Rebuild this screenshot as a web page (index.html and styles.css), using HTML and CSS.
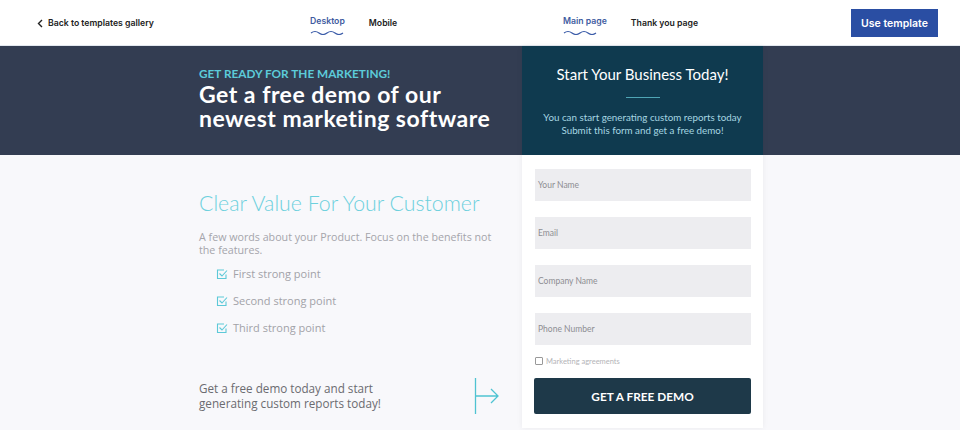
FILE: index.html
```html
<!DOCTYPE html>
<html>
<head>
<meta charset="utf-8">
<link rel="stylesheet" href="styles.css">
</head>
<body>
<header class="topbar">
  <a class="back"><svg class="chev" width="6" height="9" viewBox="0 0 6 9"><path d="M5 1 L1.5 4.5 L5 8" fill="none" stroke="#222" stroke-width="1.4"/></svg>Back to templates gallery</a>
  <nav class="tabs tabs-device">
    <span class="tab active">Desktop<svg class="wave" width="34" height="5" viewBox="0 0 34 5"><path d="M1 3 Q5 0 9 3 T17 3 T25 3 T33 3" fill="none" stroke="#3a5ba8" stroke-width="1.2"/></svg></span>
    <span class="tab">Mobile</span>
  </nav>
  <nav class="tabs tabs-page">
    <span class="tab active">Main page<svg class="wave" width="34" height="5" viewBox="0 0 34 5"><path d="M1 3 Q5 0 9 3 T17 3 T25 3 T33 3" fill="none" stroke="#3a5ba8" stroke-width="1.2"/></svg></span>
    <span class="tab">Thank you page</span>
  </nav>
  <button class="use-btn">Use template</button>
</header>
<main class="page">
  <div class="container">
    <div class="left">
      <div class="hero-text">
        <div class="kicker">GET READY FOR THE MARKETING!</div>
        <h1>Get a free demo of our<br>newest marketing software</h1>
      </div>
      <div class="value">
        <h2>Clear Value For Your Customer</h2>
        <p class="desc">A few words about your Product. Focus on the benefits not the features.</p>
        <ul class="points">
          <li><svg width="12" height="12" viewBox="0 0 12 12"><path d="M10 6.5 V10.5 H1.5 V2 H8" fill="none" stroke="#5cc9d8" stroke-width="1.1"/><path d="M3.5 5.5 L6 8 L11 2.5" fill="none" stroke="#5cc9d8" stroke-width="1.1"/></svg>First strong point</li>
          <li><svg width="12" height="12" viewBox="0 0 12 12"><path d="M10 6.5 V10.5 H1.5 V2 H8" fill="none" stroke="#5cc9d8" stroke-width="1.1"/><path d="M3.5 5.5 L6 8 L11 2.5" fill="none" stroke="#5cc9d8" stroke-width="1.1"/></svg>Second strong point</li>
          <li><svg width="12" height="12" viewBox="0 0 12 12"><path d="M10 6.5 V10.5 H1.5 V2 H8" fill="none" stroke="#5cc9d8" stroke-width="1.1"/><path d="M3.5 5.5 L6 8 L11 2.5" fill="none" stroke="#5cc9d8" stroke-width="1.1"/></svg>Third strong point</li>
        </ul>
        <div class="cta-row">
          <p class="cta-text">Get a free demo today and start<br>generating custom reports today!</p>
          <svg class="arrow" width="26" height="36" viewBox="0 0 26 36"><path d="M1.5 0 V36 M1.5 18 H24 M17 11 L24 18 L17 25" fill="none" stroke="#4fc3d2" stroke-width="1.3"/></svg>
        </div>
      </div>
    </div>
    <aside class="card">
      <div class="card-head">
        <div class="card-title">Start Your Business Today!</div>
        <div class="rule"></div>
        <p class="card-sub">You can start generating custom reports today<br>Submit this form and get a free demo!</p>
      </div>
      <form class="form">
        <div class="field">Your Name</div>
        <div class="field">Email</div>
        <div class="field">Company Name</div>
        <div class="field">Phone Number</div>
        <label class="agree"><span class="box"></span>Marketing agreements</label>
        <div class="submit">GET A FREE DEMO</div>
      </form>
    </aside>
  </div>
</main>
</body>
</html>
```
FILE: styles.css
```css
* { box-sizing: border-box; }
html, body { margin: 0; padding: 0; }
body {
  width: 960px;
  height: 430px;
  overflow: hidden;
  font-family: "Open Sans", sans-serif;
  background: #f8f8fb;
}
.topbar {
  height: 46px;
  background: #fff;
  border-bottom: 1px solid #e3e8ef;
  display: flex;
  align-items: center;
  font-family: Inter, sans-serif;
  font-weight: 600;
  font-size: 8.7px;
  color: #222;
  padding: 0 22px 0 37px;
}
.back { display: flex; align-items: center; gap: 5px; width: 273px; }
.chev { margin-top: 1px; }
.tabs { display: flex; gap: 24px; }
.tabs-device { width: 253px; }
.tabs-page { width: 288px; }
.tab { position: relative; }
.tab.active { color: #3f5c9f; top: -2px; }
.tab.active .wave { position: absolute; left: 0; top: 14px; }
.use-btn {
  margin-left: auto;
  width: 87px;
  height: 28px;
  background: #2a4ea3;
  color: #fff;
  border: 0;
  font-family: Inter, sans-serif;
  font-weight: 600;
  font-size: 10.5px;
  padding: 0;
  margin-top: 1px;
}
.page {
  height: 384px;
  background: linear-gradient(#333d52 0, #333d52 109px, #f8f8fb 109px);
}
.container {
  width: 565px;
  margin: 0 0 0 199px;
  display: flex;
}
.left { width: 323px; }
.hero-text { height: 109px; padding-top: 21px; }
.kicker {
  font-family: Lato, sans-serif;
  font-weight: 700;
  font-size: 11.8px;
  line-height: 14px;
  color: #5ccbd9;
}
h1 {
  margin: 1px 0 0;
  font-family: Lato, sans-serif;
  font-weight: 700;
  font-size: 23px;
  letter-spacing: 0.5px;
  line-height: 24px;
  color: #fff;
}
.value { padding-top: 35px; }
h2 {
  margin: 0;
  font-family: Lato, sans-serif;
  font-weight: 300;
  font-size: 21.3px;
  line-height: 26px;
  color: #6dd0dd;
}
.desc {
  margin: 15px 0 0;
  font-size: 10.7px;
  line-height: 13px;
  color: #a5a5ab;
  width: 296px;
}
.points { list-style: none; margin: 3px 0 0; padding: 0 0 0 17px; }
.points li {
  display: flex;
  align-items: center;
  gap: 5px;
  height: 27px;
  font-size: 11px;
  color: #a2a2a8;
}
.cta-row {
  display: flex;
  align-items: center;
  margin-top: 37px;
}
.cta-text {
  margin: 0;
  font-size: 11.7px;
  line-height: 15px;
  color: #6b6b70;
  width: 275px;
}
.arrow { display: block; }
.card {
  width: 241px;
  background: #fff;
  box-shadow: 0 0 6px rgba(0,0,0,0.06);
  height: 382px;
}
.card-head {
  height: 109px;
  background: #0f3a4f;
  text-align: center;
  padding-top: 19px;
}
.card-title {
  font-family: Lato, sans-serif;
  font-size: 15px;
  color: #fff;
  line-height: 18px;
}
.rule { width: 34px; height: 1px; background: #4fa5b5; margin: 14px auto 0; }
.card-sub {
  margin: 13px 0 0;
  font-family: Lato, sans-serif;
  font-size: 9.8px;
  line-height: 13px;
  color: #a6d6e2;
}
.form { padding: 14px 12px 0 13px; display: flex; flex-direction: column; }
.field {
  height: 32px;
  background: #ededf0;
  margin-bottom: 16px;
  font-family: Lato, sans-serif;
  font-size: 8.5px;
  color: #8e8e93;
  display: flex;
  align-items: center;
  padding-left: 3px;
}
.field:nth-child(4) { margin-bottom: 11px; }
.agree {
  display: flex;
  align-items: center;
  gap: 3px;
  font-family: Lato, sans-serif;
  font-size: 7.5px;
  color: #b4b4b8;
  height: 10px;
}
.box { width: 8px; height: 8px; border: 1px solid #999; border-radius: 1px; background: #fff; }
.submit {
  margin-top: 12px;
  height: 36px;
  background: #1e3949;
  border-radius: 2px;
  color: #fff;
  font-family: Lato, sans-serif;
  font-weight: 700;
  font-size: 11.8px;
  display: flex;
  align-items: center;
  justify-content: center;
  margin-left: -1px;
}
```
